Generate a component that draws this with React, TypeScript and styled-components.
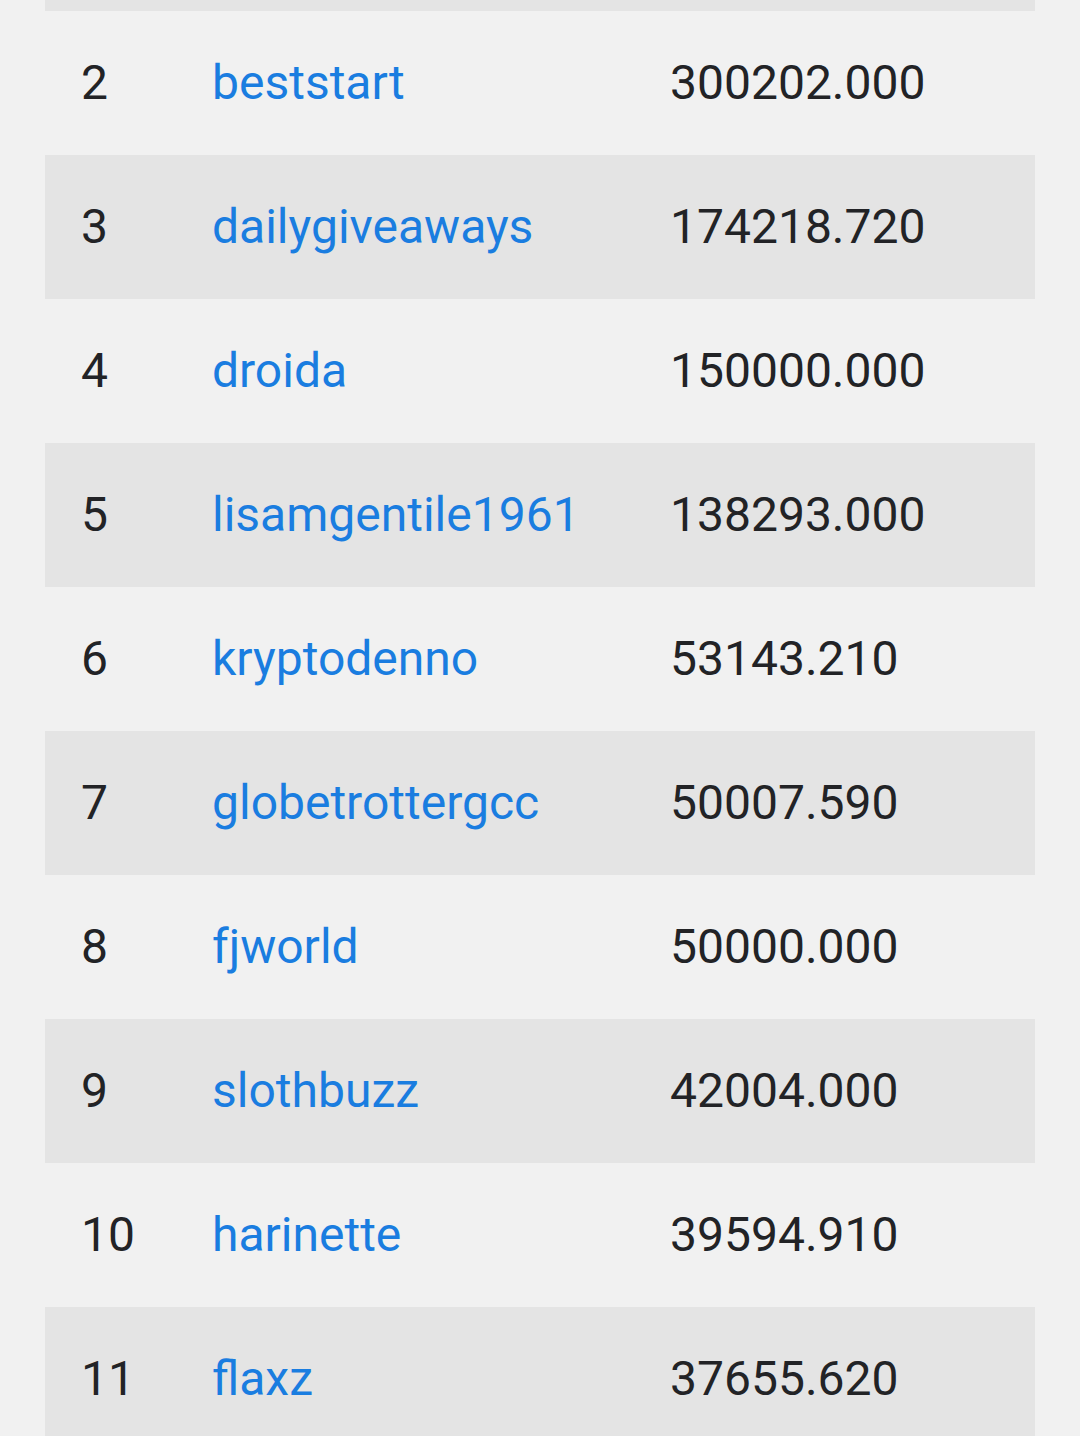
import { createGlobalStyle, styled } from 'styled-components';

const GlobalStyle = createGlobalStyle`
  html, body {
    margin: 0;
    padding: 0;
    background: #f1f1f1;
    font-family: Roboto, 'Noto Sans', sans-serif;
  }
`;

const Page = styled.div`
  width: 1080px;
  height: 1436px;
  overflow: hidden;
  background: #f1f1f1;
`;

const Table = styled.div`
  margin: 0 45px;
  display: flex;
  flex-direction: column;
`;

// tail end of the previous (striped) row, scrolled off the top
const RowTail = styled.div`
  height: 11px;
  background: #e4e4e4;
`;

const Row = styled.div<{ $striped: boolean }>`
  display: grid;
  grid-template-columns: 167px 458px 1fr;
  align-items: center;
  height: 144px;
  flex-shrink: 0;
  background: ${(p) => (p.$striped ? '#e4e4e4' : '#f1f1f1')};
  font-size: 48px;
  line-height: 1;
`;

const Rank = styled.span`
  padding-left: 36px;
  color: #222326;
`;

const Name = styled.a`
  color: #1a7de0;
  text-decoration: none;
`;

const Amount = styled.span`
  color: #222326;
`;

const rows: [number, string, string][] = [
  [2, 'beststart', '300202.000'],
  [3, 'dailygiveaways', '174218.720'],
  [4, 'droida', '150000.000'],
  [5, 'lisamgentile1961', '138293.000'],
  [6, 'kryptodenno', '53143.210'],
  [7, 'globetrottergcc', '50007.590'],
  [8, 'fjworld', '50000.000'],
  [9, 'slothbuzz', '42004.000'],
  [10, 'harinette', '39594.910'],
  [11, 'flaxz', '37655.620'],
];

function App() {
  return (
    <Page>
      <GlobalStyle />
      <Table>
        <RowTail />
        {rows.map(([rank, name, amount]) => (
          <Row key={rank} $striped={rank % 2 === 1}>
            <Rank>{rank}</Rank>
            <Name href="#">{name}</Name>
            <Amount>{amount}</Amount>
          </Row>
        ))}
      </Table>
    </Page>
  );
}

export default App;
